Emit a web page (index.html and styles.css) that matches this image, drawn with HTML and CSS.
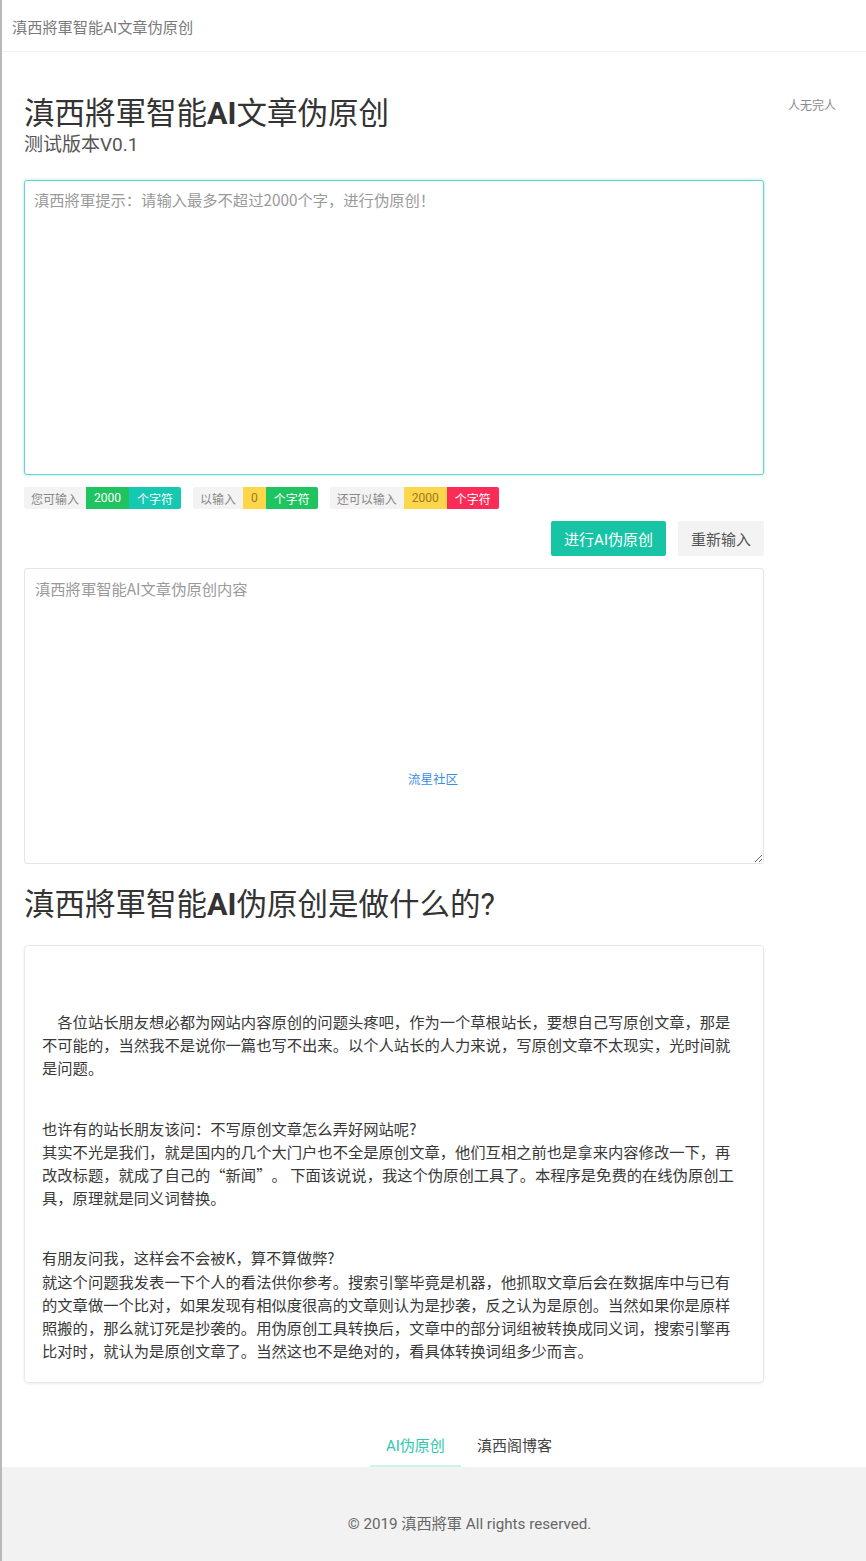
FILE: index.html
```html
<!DOCTYPE html>
<html lang="zh-CN">
<head>
<meta charset="utf-8">
<title>滇西將軍智能AI文章伪原创</title>
<link rel="stylesheet" href="styles.css">
</head>
<body>
<header class="topbar"><span class="brand">滇西將軍智能AI文章伪原创</span></header>
<div class="page">
  <main class="main">
    <h1 class="title">滇西將軍智能<b>AI</b>文章伪原创</h1>
    <p class="subtitle">测试版本V0.1</p>
    <textarea class="input" placeholder="滇西將軍提示：请输入最多不超过2000个字，进行伪原创！"></textarea>
    <div class="counters">
      <span class="counter"><span class="tag tag-grey">您可输入</span><span class="tag tag-green">2000</span><span class="tag tag-teal">个字符</span></span>
      <span class="counter"><span class="tag tag-grey">以输入</span><span class="tag tag-yellow">0</span><span class="tag tag-green">个字符</span></span>
      <span class="counter"><span class="tag tag-grey">还可以输入</span><span class="tag tag-yellow">2000</span><span class="tag tag-red">个字符</span></span>
    </div>
    <div class="actions">
      <button class="btn btn-primary" type="button">进行AI伪原创</button>
      <button class="btn btn-plain" type="button">重新输入</button>
    </div>
    <div class="output-wrap">
      <textarea class="output" placeholder="滇西將軍智能AI文章伪原创内容"></textarea>
      <a class="credit" href="#">流星社区</a>
    </div>
    <h2 class="heading">滇西將軍智能<b>AI</b>伪原创是做什么的?</h2>
    <article class="card">
      <p>　各位站长朋友想必都为网站内容原创的问题头疼吧，作为一个草根站长，要想自己写原创文章，那是不可能的，当然我不是说你一篇也写不出来。以个人站长的人力来说，写原创文章不太现实，光时间就是问题。</p>
      <p>也许有的站长朋友该问：不写原创文章怎么弄好网站呢?<br>其实不光是我们，就是国内的几个大门户也不全是原创文章，他们互相之前也是拿来内容修改一下，再改改标题，就成了自己的“新闻”。 下面该说说，我这个伪原创工具了。本程序是免费的在线伪原创工具，原理就是同义词替换。</p>
      <p>有朋友问我，这样会不会被K，算不算做弊?<br>就这个问题我发表一下个人的看法供你参考。搜索引擎毕竟是机器，他抓取文章后会在数据库中与已有的文章做一个比对，如果发现有相似度很高的文章则认为是抄袭，反之认为是原创。当然如果你是原样照搬的，那么就订死是抄袭的。用伪原创工具转换后，文章中的部分词组被转换成同义词，搜索引擎再比对时，就认为是原创文章了。当然这也不是绝对的，看具体转换词组多少而言。</p>
    </article>
  </main>
  <aside class="side">人无完人</aside>
</div>
<nav class="foot-nav">
  <a class="nav-item active" href="#">AI伪原创</a>
  <a class="nav-item" href="#">滇西阁博客</a>
</nav>
<footer class="footer">© 2019 滇西將軍 All rights reserved.</footer>
</body>
</html>
```

FILE: styles.css
```css
* { box-sizing: border-box; }
html, body { margin: 0; padding: 0; }
body {
  font-family: Roboto, "Noto Sans CJK SC", sans-serif;
  color: #333;
  background: #fff;
  border-left: 2px solid #b9b9b9;
  min-height: 1561px;
}
.topbar {
  height: 52px;
  border-bottom: 1px solid #f0f0f0;
  padding-left: 10px;
  display: flex;
  align-items: center;
}
.brand {
  font-size: 15.2px;
  color: #7a7a7a;
}
.page {
  display: grid;
  grid-template-columns: 740px 1fr;
  padding-left: 22px;
}
.main { padding-top: 42.5px; }
.side {
  padding: 46px 0 0 24px;
  font-size: 12px;
  line-height: 16px;
  color: #8a8a8a;
}
.title {
  margin: 0;
  font-size: 30.5px;
  line-height: 37px;
  font-weight: 400;
  color: #333;
}
.title b, .heading b { font-weight: 700; }
.subtitle {
  margin: 0;
  font-size: 19px;
  line-height: 25px;
  color: #555;
}
.input, .output {
  display: block;
  width: 740px;
  font-family: "Noto Sans CJK SC", Roboto, sans-serif;
  font-size: 15.3px;
  line-height: 20px;
  border-radius: 3px;
  outline: none;
  color: #333;
  background: #fff;
}
.input::placeholder, .output::placeholder { color: #9a9a9a; }
.input {
  margin-top: 23.5px;
  height: 295px;
  padding: 8px 9px;
  border: 1px solid #62d6cf;
  box-shadow: 0 0 3px rgba(80, 205, 198, 0.55);
  resize: none;
}
.counters {
  display: flex;
  gap: 12px;
  margin-top: 12px;
}
.counter {
  display: inline-flex;
  height: 22px;
  border-radius: 2px;
  overflow: hidden;
}
.tag {
  display: inline-flex;
  align-items: center;
  padding: 0 8px;
  font-size: 12px;
  color: #fff;
}
.tag-grey { background: #f3f3f3; color: #888; padding: 0 7px; }
.tag-green { background: #1fc360; }
.tag-teal { background: #14c8b2; }
.tag-yellow { background: #fdd64c; color: #9a7a1e; }
.tag-red { background: #fc2c58; }
.actions {
  display: flex;
  justify-content: flex-end;
  gap: 12px;
  margin-top: 12px;
}
.btn {
  height: 35px;
  padding: 0 13px;
  border: none;
  border-radius: 2px;
  font-family: Roboto, "Noto Sans CJK SC", sans-serif;
  font-size: 15px;
  cursor: pointer;
}
.btn-primary { background: #17c5a6; color: #fff; }
.btn-plain { background: #f3f3f3; color: #555; }
.output-wrap {
  position: relative;
  margin-top: 12px;
}
.output {
  height: 296px;
  padding: 9px 10px;
  border: 1px solid #e4e4e4;
  resize: vertical;
}
.credit {
  position: absolute;
  left: 409px;
  top: 203px;
  transform: translateX(-50%);
  font-size: 12.5px;
  line-height: 18px;
  color: #3a8fe4;
  text-decoration: none;
}
.heading {
  margin: 21.5px 0 22.5px;
  font-size: 30.5px;
  line-height: 37px;
  font-weight: 400;
  color: #333;
}
.card {
  border: 1px solid #e8e8e8;
  border-radius: 4px;
  box-shadow: 0 1px 3px rgba(0, 0, 0, 0.08);
  padding: 64px 20px 20px 17px;
  font-family: "Noto Sans CJK SC", Roboto, sans-serif;
  font-size: 15.3px;
  line-height: 23.2px;
  color: #383838;
  text-spacing-trim: space-all;
}
.card p { margin: 0 0 37px; }
.card p:last-child { margin-bottom: 0; }
.foot-nav {
  display: flex;
  margin-top: 43px;
  padding-left: 368px;
  height: 41px;
}
.nav-item {
  display: block;
  padding: 0 16px;
  font-size: 15px;
  line-height: 40px;
  color: #444;
  text-decoration: none;
}
.nav-item.active {
  color: #2ec7b0;
  border-bottom: 2px solid rgba(60, 200, 180, 0.25);
}
.footer {
  background: #f2f2f2;
  padding: 47px 0 27px 71px;
  text-align: center;
  font-size: 15.2px;
  line-height: 20px;
  color: #666;
}
```
